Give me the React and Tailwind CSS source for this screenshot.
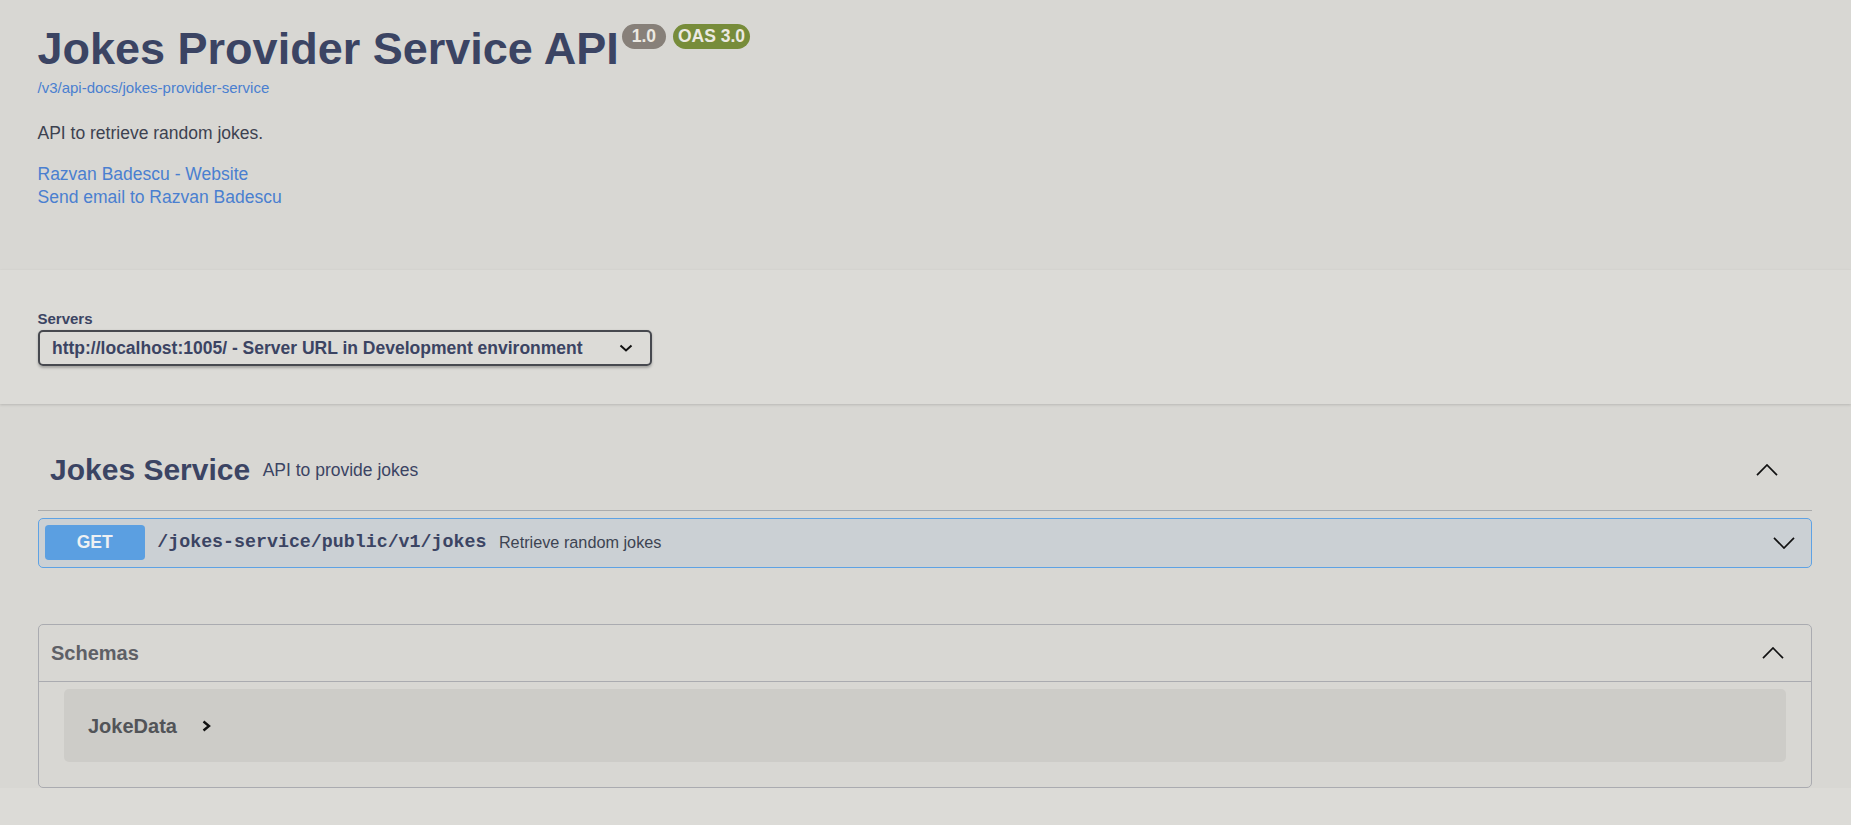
export default function App() {
  const up = (
    <svg width="22" height="12" viewBox="0 0 22 12" fill="none" aria-hidden="true">
      <polyline points="1,11.2 11,1 21,11.2" stroke="#111" strokeWidth="1.7" />
    </svg>
  );
  return (
    <div className="min-h-screen bg-[#dcdbd7] font-['Liberation_Sans',Arial,sans-serif]">
      <div className="bg-[#d8d7d3]">
        {/* Info */}
        <div className="px-[37.5px] pt-[23.5px] pb-[61.5px]">
          <div className="flex items-start">
            <h2 className="text-[45px] leading-[50px] font-bold text-[#3b4463]">Jokes Provider Service API</h2>
            <span className="ml-[3px] h-[25px] px-[10px] rounded-full bg-[#878079] text-[17.5px] leading-[25px] font-bold text-[#ece9e2]">1.0</span>
            <span className="ml-[7px] h-[25px] px-[5px] rounded-full bg-[#778c3a] text-[17.5px] leading-[25px] font-bold text-[#ece9e2]">OAS 3.0</span>
          </div>
          <a className="block w-max mt-[5.5px] text-[15px] leading-[18px] text-[#4a7fd0]">/v3/api-docs/jokes-provider-service</a>
          <p className="mt-[25px] text-[17.5px] leading-[22px] text-[#3d4250]">API to retrieve random jokes.</p>
          <div className="mt-[18.5px] text-[17.5px] leading-[23px] text-[#4a7fd0]">
            <div>Razvan Badescu - Website</div>
            <div>Send email to Razvan Badescu</div>
          </div>
        </div>

        {/* Servers */}
        <div className="relative z-10 bg-[#dcdbd7] shadow-[0_1.25px_2.5px_0_rgba(0,0,0,0.15)] px-[37.5px] pt-[40px] pb-[38px]">
          <div className="text-[15px] leading-[18px] font-bold text-[#3b4463]">Servers</div>
          <div className="mt-[2px] w-[614px] h-[36px] border-2 border-[#47494f] rounded-[5px] shadow-[0_1.25px_2.5px_0_rgba(0,0,0,0.25)] flex items-center justify-between pl-[12.5px] pr-[17px]">
            <span className="text-[17.5px] font-bold text-[#3b4463]">http://localhost:1005/ - Server URL in Development environment</span>
            <svg width="14" height="8" viewBox="0 0 14 8" fill="none" aria-hidden="true">
              <polyline points="1.5,1.5 7,6.5 12.5,1.5" stroke="#111" strokeWidth="2" />
            </svg>
          </div>
        </div>

        {/* Operations */}
        <div className="pl-[37.5px] pr-[39px] pt-[26px]">
          <div className="h-[81px] flex items-center border-b border-[#abacad] pl-[12.5px] pr-[34px]">
            <span className="text-[30px] leading-[33.5px] font-bold text-[#3b4463]">Jokes Service</span>
            <span className="flex-1 px-[12.5px] text-[17.5px] text-[#3b4463]">API to provide jokes</span>
            {up}
          </div>

          <div className="mt-[6.5px] border border-[#5ea2e4] bg-[#cbd0d4] rounded-[5px] p-[6.25px] flex items-center">
            <span className="w-[100px] h-[35.7px] bg-[#5b9fe1] rounded-[3.75px] flex items-center justify-center text-[17.5px] font-bold text-[#eef1f3]">GET</span>
            <span className="px-[12.5px] font-['Liberation_Mono',monospace] text-[18.3px] font-bold text-[#3b4463]">/jokes-service/public/v1/jokes</span>
            <span className="flex-1 text-[16.25px] text-[#3d4452]">Retrieve random jokes</span>
            <svg className="mr-[9.5px]" width="22" height="12" viewBox="0 0 22 12" fill="none" aria-hidden="true">
              <polyline points="1,0.8 11,11 21,0.8" stroke="#111" strokeWidth="1.7" />
            </svg>
          </div>

          {/* Schemas */}
          <div className="mt-[56.5px] border border-[#aaabb0] rounded-[5px]">
            <div className="h-[57px] flex items-center justify-between border-b border-[#aaabb0] pl-[12.5px] pr-[26.7px]">
              <span className="text-[20px] font-bold text-[#5e6066]">Schemas</span>
              {up}
            </div>
            <div className="mx-[25px] mt-[7px] mb-[25.3px] h-[73px] bg-[#cdccc8] rounded-[5px] flex items-center pl-[24.5px]">
              <span className="text-[20px] font-bold text-[#525458]">JokeData</span>
              <svg className="ml-[25px]" width="9" height="12" viewBox="0 0 9 12" fill="none" aria-hidden="true">
                <polyline points="1.5,1.5 7,6 1.5,10.5" stroke="#111" strokeWidth="2.4" />
              </svg>
            </div>
          </div>
        </div>
      </div>
    </div>
  );
}
